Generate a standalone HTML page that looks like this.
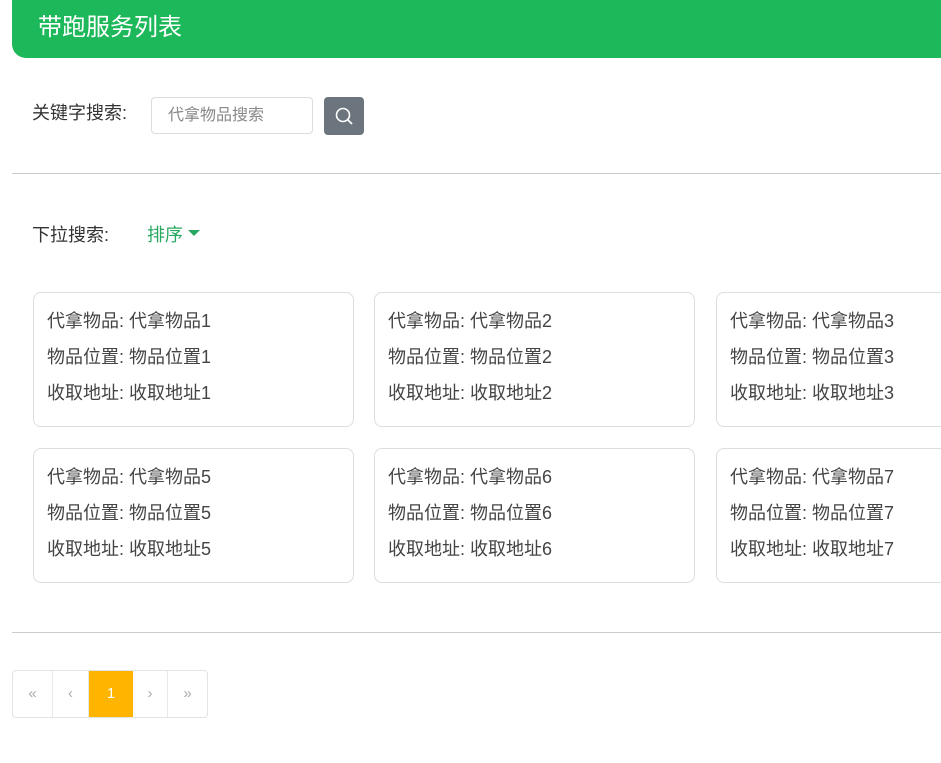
<!DOCTYPE html>
<html><head><meta charset="utf-8"><style>
body{margin:0;width:941px;height:763px;overflow:hidden;background:#fff;font-family:"Liberation Sans","Noto Sans CJK SC",sans-serif;color:#333;position:relative}
.hd{position:absolute;left:12px;top:0;width:940px;height:58px;background:#1cb85a;border-radius:0 0 0 14px;color:#fff;font-size:24px;line-height:56px;padding-left:26px;box-sizing:border-box}
.a{position:absolute}
.lbl{font-size:18px}
.inp{left:151px;top:97px;width:162px;height:37px;border:1px solid #ddd;border-radius:4px;box-sizing:border-box;font-size:16px;color:#888;line-height:35px;padding-left:16px}
.btn{left:324px;top:97px;width:40px;height:38px;background:#6c757d;border-radius:4px}
.hr{left:12px;width:929px;height:1px;background:#ccc}
.card{width:321px;height:135px;border:1px solid #ddd;border-radius:8px;box-sizing:border-box;padding:10px 0 0 13px;font-size:18px;line-height:36px;color:#444;white-space:nowrap;overflow:hidden}
.pg{left:12px;top:670px;height:46px;display:flex;border:1px solid #e3e3e3;border-radius:4px;overflow:hidden}
.pg div{height:46px;line-height:46px;text-align:center;color:#aaa;font-size:15px;border-right:1px solid #e8e8e8;box-sizing:border-box}
</style></head><body>
<div class="hd">带跑服务列表</div>
<div class="a lbl" style="left:32px;top:99px">关键字搜索:</div>
<div class="a inp">代拿物品搜索</div>
<div class="a btn"><svg width="40" height="38"><circle cx="19" cy="18" r="6.5" fill="none" stroke="#fff" stroke-width="1.6"/><line x1="24" y1="23" x2="28" y2="27" stroke="#fff" stroke-width="1.8"/></svg></div>
<div class="a hr" style="top:173px"></div>
<div class="a lbl" style="left:32px;top:221px">下拉搜索:</div>
<div class="a lbl" style="left:147px;top:221px;color:#28a760">排序 <span style="display:inline-block;width:0;height:0;border-left:6px solid transparent;border-right:6px solid transparent;border-top:6px solid #28a760;vertical-align:middle;position:relative;top:-3px"></span></div>
<div class="a card" style="left:33px;top:292px">代拿物品: 代拿物品1<br>物品位置: 物品位置1<br>收取地址: 收取地址1</div>
<div class="a card" style="left:374px;top:292px">代拿物品: 代拿物品2<br>物品位置: 物品位置2<br>收取地址: 收取地址2</div>
<div class="a card" style="left:716px;top:292px">代拿物品: 代拿物品3<br>物品位置: 物品位置3<br>收取地址: 收取地址3</div>
<div class="a card" style="left:33px;top:448px">代拿物品: 代拿物品5<br>物品位置: 物品位置5<br>收取地址: 收取地址5</div>
<div class="a card" style="left:374px;top:448px">代拿物品: 代拿物品6<br>物品位置: 物品位置6<br>收取地址: 收取地址6</div>
<div class="a card" style="left:716px;top:448px">代拿物品: 代拿物品7<br>物品位置: 物品位置7<br>收取地址: 收取地址7</div>
<div class="a hr" style="top:632px"></div>
<div class="a pg"><div style="width:40px">«</div><div style="width:36px">‹</div><div style="width:44px;background:#ffb400;color:#fff;border:none">1</div><div style="width:35px">›</div><div style="width:39px;border:none">»</div></div>
</body></html>
